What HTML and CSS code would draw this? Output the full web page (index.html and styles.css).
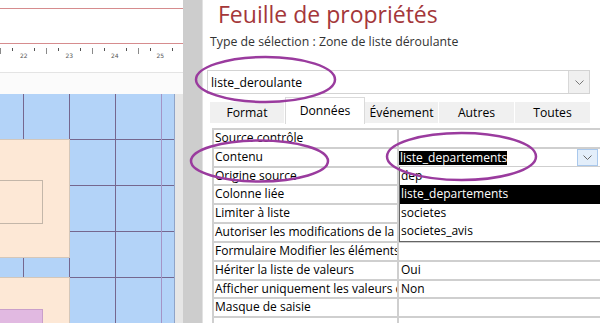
FILE: index.html
```html
<!DOCTYPE html>
<html lang="fr">
<head>
    <meta charset="UTF-8">
    <title>Feuille de propriétés</title>
    <link rel="stylesheet" href="styles.css">
</head>
<body>
<div class="app">
    <div class="design">
        <div class="page-top">
            <div class="guides"></div>
            <div class="ruler">
                <span>22</span><span>23</span><span>24</span><span>25</span>
            </div>
        </div>
        <div class="section-bar"></div>
        <div class="canvas-row">
            <div class="canvas">
                <div class="ctl beige box-1"><div class="ctl inner"></div></div>
                <div class="ctl beige box-2"><div class="ctl pink"></div></div>
            </div>
            <div class="vscroll"></div>
        </div>
    </div>

    <div class="splitter"></div>

    <div class="props">
        <h1 class="title">Feuille de propriétés</h1>
        <p class="subtitle">Type de sélection : Zone de liste déroulante</p>

        <div class="name-combo">
            <span class="name-text">liste_deroulante</span>
            <span class="name-btn">
                <svg width="9" height="5" viewBox="0 0 9 5"><polyline points="0.5,0.5 4.5,4.5 8.5,0.5" fill="none" stroke="#777" stroke-width="1"/></svg>
            </span>
        </div>

        <div class="tabs">
            <div class="tab">Format</div>
            <div class="tab active">Données</div>
            <div class="tab">Événement</div>
            <div class="tab">Autres</div>
            <div class="tab">Toutes</div>
        </div>

        <div class="grid">
            <div class="row"><div class="lbl">Source contrôle</div><div class="val"></div></div>
            <div class="row">
                <div class="lbl">Contenu</div>
                <div class="val combo">
                    <span class="sel">liste_departements</span>
                    <span class="drop-btn">
                        <svg width="9" height="5" viewBox="0 0 9 5"><polyline points="0.5,0.5 4.5,4.5 8.5,0.5" fill="none" stroke="#666" stroke-width="1"/></svg>
                    </span>
                </div>
            </div>
            <div class="row short"><div class="lbl">Origine source</div><div class="val"></div></div>
            <div class="row"><div class="lbl">Colonne liée</div><div class="val"></div></div>
            <div class="row"><div class="lbl">Limiter à liste</div><div class="val"></div></div>
            <div class="row"><div class="lbl">Autoriser les modifications de la liste de valeurs</div><div class="val"></div></div>
            <div class="row"><div class="lbl">Formulaire Modifier les éléments de la liste</div><div class="val"></div></div>
            <div class="row"><div class="lbl">Hériter la liste de valeurs</div><div class="val">Oui</div></div>
            <div class="row short"><div class="lbl">Afficher uniquement les valeurs de la source</div><div class="val">Non</div></div>
            <div class="row"><div class="lbl">Masque de saisie</div><div class="val"></div></div>
            <div class="row"><div class="lbl"></div><div class="val"></div></div>
        </div>

        <ul class="droplist">
            <li>dep</li>
            <li class="hl">liste_departements</li>
            <li>societes</li>
            <li>societes_avis</li>
        </ul>
    </div>
</div>

<svg class="marks" width="600" height="323" viewBox="0 0 600 323">
    <ellipse cx="265.5" cy="79.5" rx="69.5" ry="22.5"/>
    <ellipse cx="259.5" cy="161" rx="68.5" ry="20.5"/>
    <ellipse cx="461.5" cy="156.5" rx="74.5" ry="23.5"/>
</svg>
</body>
</html>
```

FILE: styles.css
```css
* {
    box-sizing: border-box;
}

body {
    margin: 0;
    width: 600px;
    height: 323px;
    overflow: hidden;
    font-family: "Open Sans", "Noto Sans", sans-serif;
    font-size: 12px;
    color: #000;
    background: #fff;
}

.app {
    display: flex;
    height: 323px;
}

/* design view */
.design {
    width: 183px;
    display: flex;
    flex-direction: column;
}

.page-top {
    height: 72px;
    background: #fff;
}

.guides {
    margin-top: 8px;
    height: 36px;
    border-top: 1px solid #d68c8e;
    border-bottom: 1px solid #d68c8e;
}

.ruler {
    height: 28px;
    display: flex;
    padding-left: 1px;
    background:
        repeating-linear-gradient(to right, #8a8a8a 0 1px, transparent 1px 46px) 0 4px / 100% 6px no-repeat,
        repeating-linear-gradient(to right, transparent 0 12px, #555 12px 13px, transparent 13px 34px, #555 34px 35px, transparent 35px 46px) 0 4px / 100% 3px no-repeat;
}

.ruler span {
    width: 46px;
    text-align: center;
    font-family: "DejaVu Sans", sans-serif;
    font-size: 6px;
    color: #555;
    padding-top: 9px;
    line-height: 6px;
}

.section-bar {
    height: 22px;
    border-top: 1px solid #e4e4e4;
    background: #fbfbfb;
}

.canvas-row {
    flex: 1;
    display: flex;
}

.canvas {
    position: relative;
    width: 175px;
    overflow: hidden;
    border-right: 1px solid #8fa4c8;
    background:
        linear-gradient(to right, transparent 161px, #a494c6 161px 162px, transparent 162px),
        repeating-linear-gradient(to bottom, transparent 0 45px, #75678f 45px 46px),
        repeating-linear-gradient(to right, transparent 0 23px, #75678f 23px 24px, transparent 24px 46px),
        #b3d3f8;
}

.vscroll {
    width: 8px;
    background: #e6e6e6;
}

.ctl {
    position: absolute;
}

.beige {
    left: -2px;
    width: 72px;
    background: #fde8d6;
    border: 1px solid #d4c7ba;
}

.box-1 {
    top: 45px;
    height: 119px;
}

.box-2 {
    top: 183px;
    height: 60px;
}

.inner {
    left: -2px;
    top: 40px;
    width: 46px;
    height: 44px;
    border: 1px solid #c3b6a9;
}

.pink {
    left: -2px;
    top: 31px;
    width: 46px;
    height: 30px;
    background: #e1b9e1;
    border: 1px solid #c99fca;
}

.splitter {
    width: 20px;
    background: #cdcdcd;
    border-right: 1px solid #e2e2e2;
}

/* property sheet */
.props {
    position: relative;
    flex: 1;
    background: #fff;
}

.title {
    margin: 0 0 0 15px;
    height: 32px;
    font-size: 23px;
    font-weight: normal;
    line-height: 28px;
    color: #a4373a;
}

.subtitle {
    margin: 0 0 0 7px;
    height: 20px;
    line-height: 20px;
    font-size: 12.3px;
    color: #333;
}

.name-combo {
    margin: 18px 0 0 4px;
    width: 383px;
    height: 24px;
    border: 1px solid #d3d3d3;
    display: flex;
    align-items: center;
}

.name-text {
    flex: 1;
    padding-left: 3px;
    font-size: 12.2px;
}

.name-btn {
    width: 21px;
    height: 22px;
    background: #f0f0f0;
    border-left: 1px solid #d8d8d8;
    display: flex;
    align-items: center;
    justify-content: center;
}

.tabs {
    margin: 3px 0 0 7px;
    height: 27px;
    display: flex;
    align-items: flex-end;
    font-size: 12.2px;
}

.tab {
    height: 21px;
    margin-bottom: 1px;
    line-height: 21px;
    text-align: center;
    background: #f0f0f0;
    border-right: 1px solid #fff;
    width: 75px;
}

.tab:nth-child(1) { width: 75px; }
.tab:nth-child(2) { width: 80px; }
.tab:nth-child(3) { width: 74px; }
.tab:nth-child(4) { width: 76px; }
.tab:nth-child(5) { width: 76px; }

.tab.active {
    height: 27px;
    margin-bottom: 0;
    line-height: 25px;
    background: #fff;
    border: 1px solid #dadada;
    border-bottom: none;
}

.grid {
    margin: 4px 0 0 9px;
    border-top: 2px solid #cfcfcf;
    border-left: 2px solid #cfcfcf;
}

.row {
    display: grid;
    grid-template-columns: 183px 1fr;
    height: 19px;
    border-bottom: 2px solid #cfcfcf;
    line-height: 16px;
}

.row.short {
    height: 18px;
    line-height: 15px;
}

.lbl {
    padding-left: 1px;
    white-space: nowrap;
    overflow: hidden;
}

.val {
    padding-left: 2px;
    white-space: nowrap;
    overflow: hidden;
    border-left: 2px solid #cfcfcf;
}

.combo {
    display: flex;
    align-items: center;
    padding-left: 0;
}

.sel {
    display: inline-block;
    height: 14px;
    line-height: 14px;
    background: #000;
    color: #fff;
    padding: 0 0 0 1px;
}

.drop-btn {
    margin-left: auto;
    margin-right: 2px;
    width: 21px;
    height: 17px;
    background: #e3eefa;
    border: 1px solid #a9c8ec;
    display: flex;
    align-items: center;
    justify-content: center;
}

.droplist {
    position: absolute;
    left: 196px;
    top: 167px;
    width: 210px;
    margin: 0;
    padding: 0;
    list-style: none;
    background: #fff;
    border-left: 1px solid #646464;
    border-bottom: 1px solid #646464;
}

.droplist li {
    height: 18px;
    line-height: 18px;
    padding-left: 1px;
}

.droplist li:nth-child(even) {
    height: 19px;
}

.droplist .hl {
    background: #000;
    color: #fff;
}

.marks {
    position: absolute;
    left: 0;
    top: 0;
    pointer-events: none;
}

.marks ellipse {
    fill: none;
    stroke: #9a3b9e;
    stroke-width: 2.5;
}
```
